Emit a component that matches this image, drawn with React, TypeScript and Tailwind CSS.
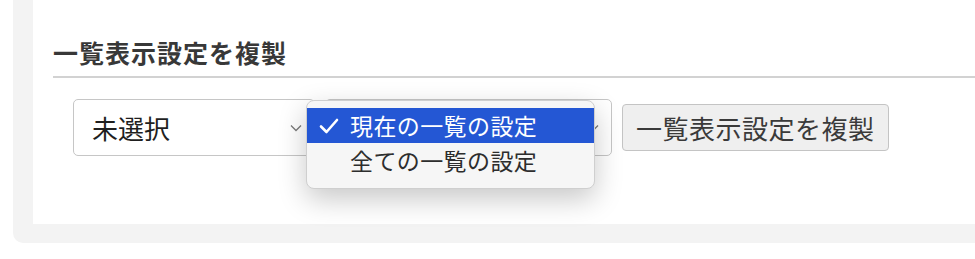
const FONT = { fontFamily: '"Noto Sans CJK JP", "Noto Sans", sans-serif' };

function Chevron() {
  return (
    <svg width="12" height="8" viewBox="0 0 12 8" className="shrink-0">
      <path d="M1 1.5 L6 6.5 L11 1.5" fill="none" stroke="#7a7a7a" strokeWidth="1.3" />
    </svg>
  );
}

export default function App() {
  return (
    <div className="h-[259px] overflow-hidden bg-white" style={FONT}>
      <div className="relative ml-[13px] rounded-bl-[10px] bg-[#f3f3f3] pb-[19px] pl-5">
        <div className="h-[224px] bg-white pl-5 pt-[33px]">
          <h2 className="text-[25px] font-bold leading-[38px] tracking-[1px] text-[#383838]">
            一覧表示設定を複製
          </h2>
          <div className="mt-[5px] h-[2px] bg-[#d2d2d2]" />
          <div className="mt-[21px] flex items-start gap-[10px] pl-5">
            <div className="flex h-[57px] w-[242px] items-center justify-between rounded-[5px] border border-[#c6c6c6] bg-white pl-[18px] pr-[12px]">
              <span className="text-[26px] leading-none text-[#1f1f1f]">未選択</span>
              <Chevron />
            </div>
            <div className="flex h-[57px] w-[287px] items-center justify-end rounded-[5px] border border-[#c6c6c6] bg-white pr-[12px]">
              <Chevron />
            </div>
            <button className="mt-[5px] flex h-[47px] items-center rounded-[4px] border border-[#c4c4c4] bg-[#efefef] px-[13px] text-[26px] leading-none tracking-[0.5px] text-[#3a3a3a]">
              一覧表示設定を複製
            </button>
          </div>
        </div>

        {/* native popup menu open over the second select */}
        <div className="absolute left-[293px] top-[100px] w-[289px] rounded-[8px] border border-[#cfcfcf] bg-[#f6f6f6] pb-[11px] pt-[7px] shadow-[0_10px_28px_rgba(0,0,0,0.22)]">
          <div className="flex h-[35px] items-center bg-[#2457d4] pl-[12px] text-white">
            <svg width="20" height="16" viewBox="0 0 20 16" className="shrink-0">
              <path d="M2 8.5 L7.5 14 L18 2" fill="none" stroke="white" strokeWidth="2.6" strokeLinecap="round" strokeLinejoin="round" />
            </svg>
            <span className="ml-[11px] text-[23px] leading-none tracking-[0.4px]">現在の一覧の設定</span>
          </div>
          <div className="flex h-[34px] items-center pl-[43px] text-[#2d2d2d]">
            <span className="text-[23px] leading-none tracking-[0.4px]">全ての一覧の設定</span>
          </div>
        </div>
      </div>
    </div>
  );
}
